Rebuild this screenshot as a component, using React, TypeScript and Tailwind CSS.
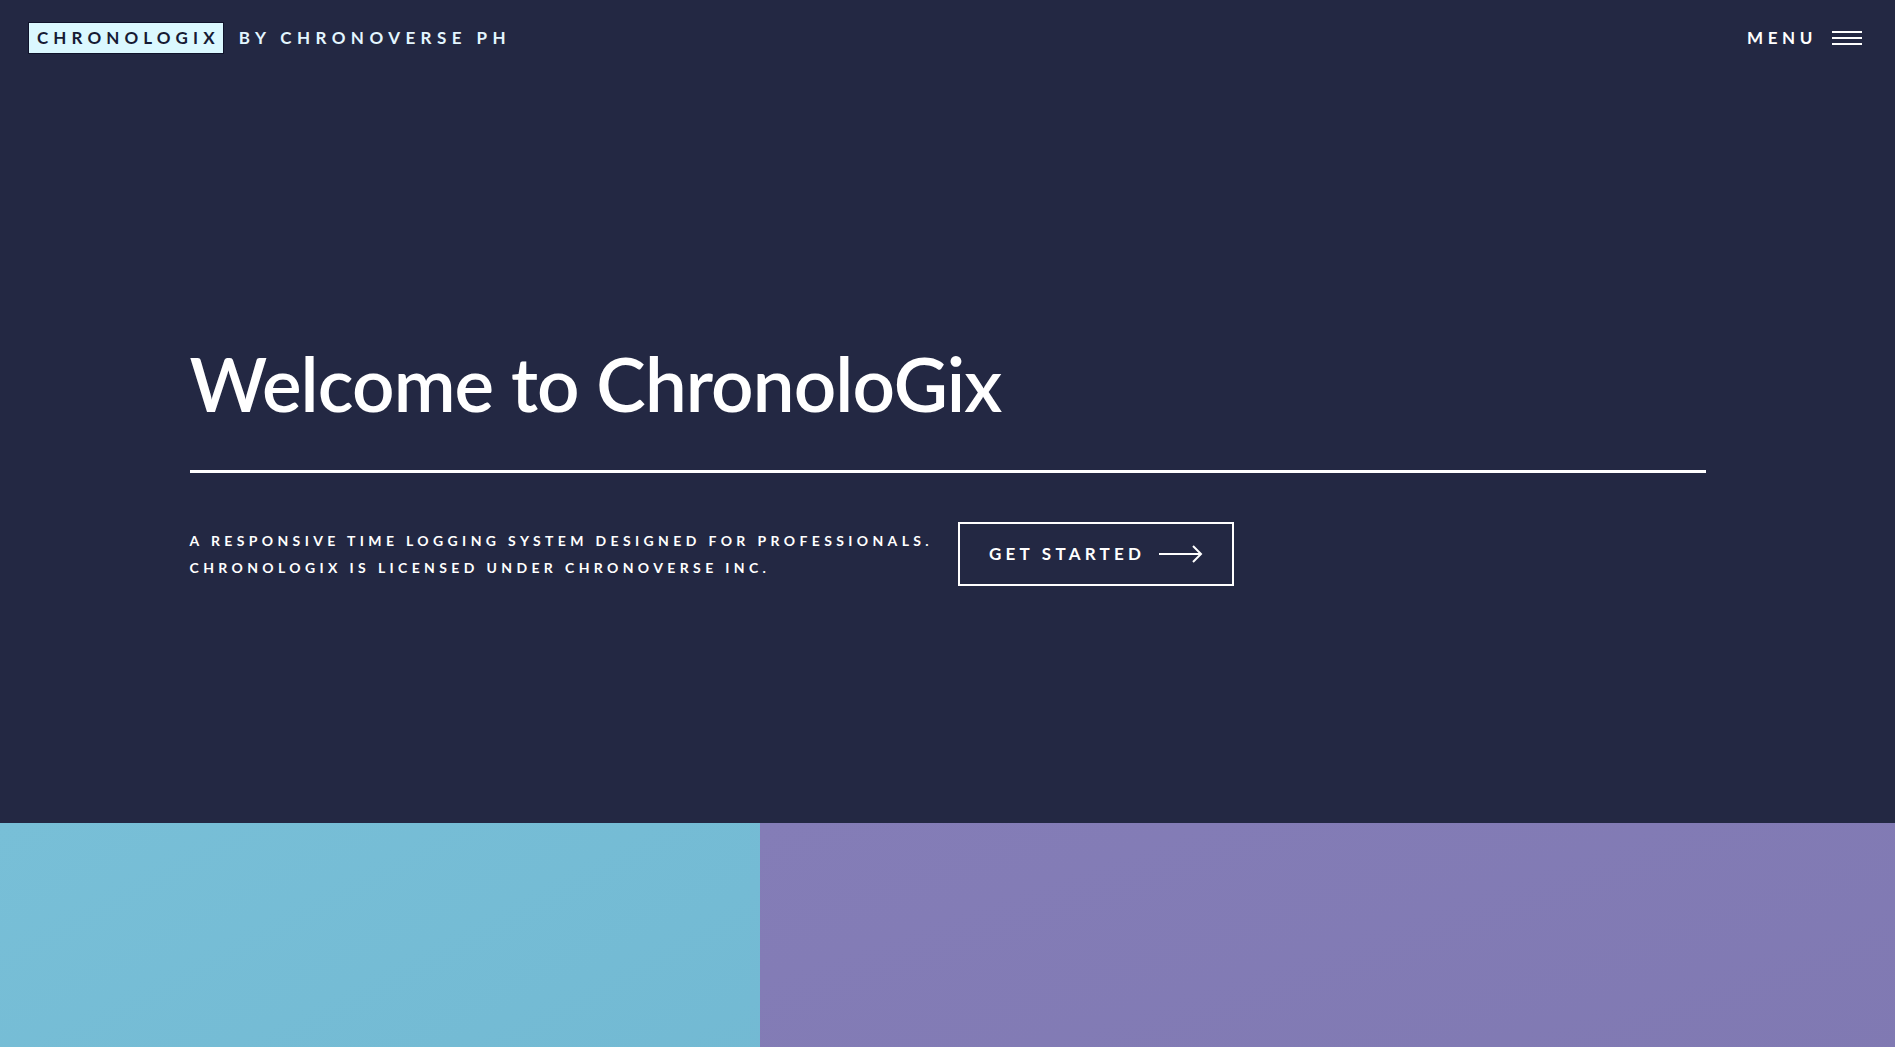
export default function App() {
  return (
    <div className="min-h-screen w-full bg-[#232843] font-['Lato','Liberation_Sans',sans-serif] text-white overflow-hidden">
      {/* hero */}
      <section className="h-[823px] flex flex-col">
        <header className="flex items-center justify-between pl-[28px] pr-[33px] pt-[22px]">
          <div className="flex items-center">
            <div className="h-[32px] flex items-center pl-[8px] pr-[3px] bg-[#dbf8ff] border border-[#10132b] text-[#161a34] text-[17px] font-bold tracking-[0.3em]">
              CHRONOLOGIX
            </div>
            <span className="ml-[15px] text-[17px] font-bold tracking-[0.32em] text-[#e3f6ff]">
              BY CHRONOVERSE PH
            </span>
          </div>
          <button className="flex items-center gap-[15px] text-[17px] font-bold tracking-[0.27em]">
            MENU
            <span className="flex flex-col gap-[4px] w-[30px]">
              <span className="h-[2px] bg-white" />
              <span className="h-[2px] bg-white" />
              <span className="h-[2px] bg-white" />
            </span>
          </button>
        </header>

        <div className="w-[80%] mx-auto mt-[285px]">
          <h1 className="text-[74.5px] leading-[88px] font-semibold tracking-[-0.012em]">
            Welcome to ChronoloGix
          </h1>
          <div className="mt-[43px] h-[3px] bg-white" />
          <div className="mt-[49px] flex items-center">
            <p className="text-[14px] font-bold leading-[27px] tracking-[0.312em] uppercase">
              A responsive time logging system designed for professionals.
              <br />
              Chronologix is licensed under Chronoverse Inc.
            </p>
            <button className="ml-[25px] h-[64px] w-[276px] border-2 border-white flex items-center justify-center gap-[14px] text-[17px] font-bold tracking-[0.25em]">
              GET STARTED
              <svg width="44" height="18" viewBox="0 0 44 18" fill="none" stroke="white" strokeWidth="2">
                <line x1="0" y1="9" x2="42" y2="9" />
                <polyline points="34,1 42,9 34,17" />
              </svg>
            </button>
          </div>
        </div>
      </section>

      {/* colour panels */}
      <section className="flex h-[400px]">
        <div className="w-[760px] shrink-0 bg-gradient-to-br from-[#78bfd7] to-[#71b8d2]" />
        <div className="flex-1 bg-gradient-to-br from-[#847db7] to-[#7f78b1]" />
      </section>
    </div>
  );
}
